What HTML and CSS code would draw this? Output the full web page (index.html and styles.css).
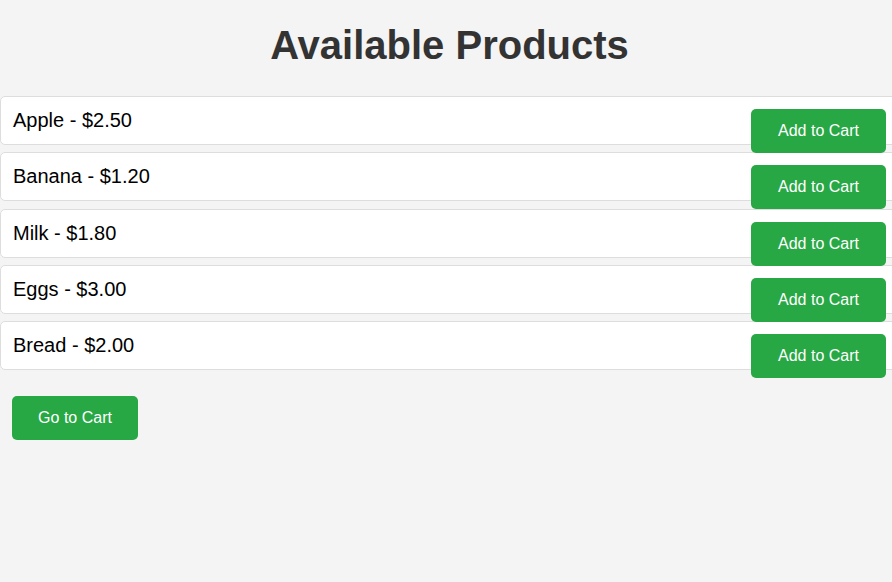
FILE: index.html
```html
<!DOCTYPE html>
<html lang="en">
<head>
<meta charset="utf-8">
<title>Available Products</title>
<link rel="stylesheet" href="styles.css">
</head>
<body>
<div class="page">
  <h1 class="title">Available Products</h1>
  <ul class="products">
    <li class="product"><button class="btn add">Add to Cart</button>Apple - $2.50</li>
    <li class="product"><button class="btn add">Add to Cart</button>Banana - $1.20</li>
    <li class="product"><button class="btn add">Add to Cart</button>Milk - $1.80</li>
    <li class="product"><button class="btn add">Add to Cart</button>Eggs - $3.00</li>
    <li class="product"><button class="btn add">Add to Cart</button>Bread - $2.00</li>
  </ul>
  <button class="btn cart">Go to Cart</button>
</div>
</body>
</html>
```

FILE: styles.css
```css
html, body {
  margin: 0;
  padding: 0;
  background: #f4f4f4;
  overflow: hidden;
}
body {
  font-family: "Liberation Sans", Arial, sans-serif;
}
.page {
  width: 899px;
}
.title {
  margin: 22px 0 28px;
  font-size: 40px;
  line-height: 46px;
  text-align: center;
  color: #333;
  font-weight: bold;
}
.products {
  list-style: none;
  margin: 0;
  padding: 0;
}
.product {
  box-sizing: border-box;
  width: 100%;
  background: #fff;
  border: 1px solid #ddd;
  border-radius: 5px;
  padding: 12px;
  margin-bottom: 7.25px;
  font-size: 20px;
  line-height: 23px;
  color: #000;
}
.btn {
  font-family: "Liberation Sans", Arial, sans-serif;
  font-size: 16px;
  line-height: 18px;
  color: #fff;
  background: #28a745;
  border: none;
  border-radius: 5px;
  height: 44px;
  padding: 0;
  cursor: pointer;
}
.add {
  float: right;
  width: 135px;
}
.cart {
  width: 126px;
  margin: 19px 0 0 12px;
}
```
